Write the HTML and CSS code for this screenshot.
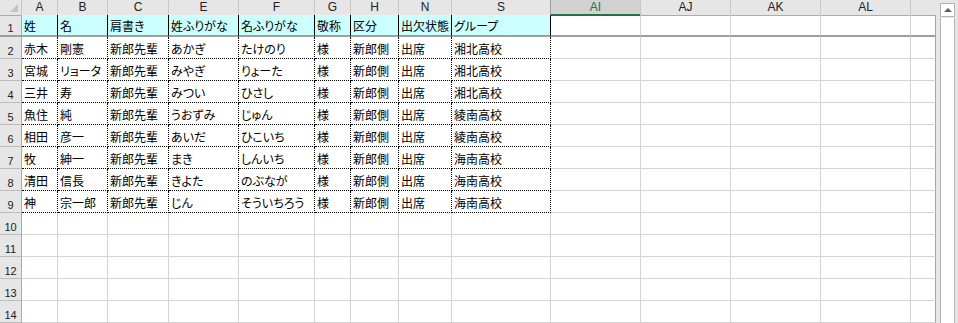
FILE: index.html
```html
<!DOCTYPE html>
<html lang="ja">
<head>
    <meta charset="UTF-8">
    <title>参加者リスト</title>
    <link rel="stylesheet" href="styles.css">
</head>
<body>
    <div class="window">
        <div class="sheet">
            <div class="row col-heads">
                <div class="corner"><span class="tri"></span></div>
                <div class="ch">A</div>
                <div class="ch">B</div>
                <div class="ch">C</div>
                <div class="ch">E</div>
                <div class="ch">F</div>
                <div class="ch">G</div>
                <div class="ch">H</div>
                <div class="ch">N</div>
                <div class="ch freeze">S</div>
                <div class="ch sel">AI</div>
                <div class="ch">AJ</div>
                <div class="ch">AK</div>
                <div class="ch">AL</div>
                <div class="ch last"></div>
            </div>

            <div class="row first">
                <div class="rh">1</div>
                <div class="c hd">姓</div>
                <div class="c hd">名</div>
                <div class="c hd">肩書き</div>
                <div class="c hd">姓ふりがな</div>
                <div class="c hd">名ふりがな</div>
                <div class="c hd">敬称</div>
                <div class="c hd">区分</div>
                <div class="c hd">出欠状態</div>
                <div class="c hd">グループ</div>
                <div class="c"></div><div class="c"></div><div class="c"></div><div class="c"></div><div class="c last"></div>
            </div>

            <div class="row">
                <div class="rh">2</div>
                <div class="c d">赤木</div><div class="c d">剛憲</div><div class="c d">新郎先輩</div><div class="c d">あかぎ</div><div class="c d">たけのり</div>
                <div class="c d">様</div><div class="c d">新郎側</div><div class="c d">出席</div><div class="c d">湘北高校</div>
                <div class="c"></div><div class="c"></div><div class="c"></div><div class="c"></div><div class="c last"></div>
            </div>
            <div class="row">
                <div class="rh">3</div>
                <div class="c d">宮城</div><div class="c d">リョータ</div><div class="c d">新郎先輩</div><div class="c d">みやぎ</div><div class="c d">りょーた</div>
                <div class="c d">様</div><div class="c d">新郎側</div><div class="c d">出席</div><div class="c d">湘北高校</div>
                <div class="c"></div><div class="c"></div><div class="c"></div><div class="c"></div><div class="c last"></div>
            </div>
            <div class="row">
                <div class="rh">4</div>
                <div class="c d">三井</div><div class="c d">寿</div><div class="c d">新郎先輩</div><div class="c d">みつい</div><div class="c d">ひさし</div>
                <div class="c d">様</div><div class="c d">新郎側</div><div class="c d">出席</div><div class="c d">湘北高校</div>
                <div class="c"></div><div class="c"></div><div class="c"></div><div class="c"></div><div class="c last"></div>
            </div>
            <div class="row">
                <div class="rh">5</div>
                <div class="c d">魚住</div><div class="c d">純</div><div class="c d">新郎先輩</div><div class="c d">うおずみ</div><div class="c d">じゅん</div>
                <div class="c d">様</div><div class="c d">新郎側</div><div class="c d">出席</div><div class="c d">綾南高校</div>
                <div class="c"></div><div class="c"></div><div class="c"></div><div class="c"></div><div class="c last"></div>
            </div>
            <div class="row">
                <div class="rh">6</div>
                <div class="c d">相田</div><div class="c d">彦一</div><div class="c d">新郎先輩</div><div class="c d">あいだ</div><div class="c d">ひこいち</div>
                <div class="c d">様</div><div class="c d">新郎側</div><div class="c d">出席</div><div class="c d">綾南高校</div>
                <div class="c"></div><div class="c"></div><div class="c"></div><div class="c"></div><div class="c last"></div>
            </div>
            <div class="row">
                <div class="rh">7</div>
                <div class="c d">牧</div><div class="c d">紳一</div><div class="c d">新郎先輩</div><div class="c d">まき</div><div class="c d">しんいち</div>
                <div class="c d">様</div><div class="c d">新郎側</div><div class="c d">出席</div><div class="c d">海南高校</div>
                <div class="c"></div><div class="c"></div><div class="c"></div><div class="c"></div><div class="c last"></div>
            </div>
            <div class="row">
                <div class="rh">8</div>
                <div class="c d">清田</div><div class="c d">信長</div><div class="c d">新郎先輩</div><div class="c d">きよた</div><div class="c d">のぶなが</div>
                <div class="c d">様</div><div class="c d">新郎側</div><div class="c d">出席</div><div class="c d">海南高校</div>
                <div class="c"></div><div class="c"></div><div class="c"></div><div class="c"></div><div class="c last"></div>
            </div>
            <div class="row">
                <div class="rh">9</div>
                <div class="c d">神</div><div class="c d">宗一郎</div><div class="c d">新郎先輩</div><div class="c d">じん</div><div class="c d">そういちろう</div>
                <div class="c d">様</div><div class="c d">新郎側</div><div class="c d">出席</div><div class="c d">海南高校</div>
                <div class="c"></div><div class="c"></div><div class="c"></div><div class="c"></div><div class="c last"></div>
            </div>

            <div class="row">
                <div class="rh">10</div>
                <div class="c"></div><div class="c"></div><div class="c"></div><div class="c"></div><div class="c"></div><div class="c"></div><div class="c"></div>
                <div class="c"></div><div class="c"></div><div class="c"></div><div class="c"></div><div class="c"></div><div class="c"></div><div class="c last"></div>
            </div>
            <div class="row">
                <div class="rh">11</div>
                <div class="c"></div><div class="c"></div><div class="c"></div><div class="c"></div><div class="c"></div><div class="c"></div><div class="c"></div>
                <div class="c"></div><div class="c"></div><div class="c"></div><div class="c"></div><div class="c"></div><div class="c"></div><div class="c last"></div>
            </div>
            <div class="row">
                <div class="rh">12</div>
                <div class="c"></div><div class="c"></div><div class="c"></div><div class="c"></div><div class="c"></div><div class="c"></div><div class="c"></div>
                <div class="c"></div><div class="c"></div><div class="c"></div><div class="c"></div><div class="c"></div><div class="c"></div><div class="c last"></div>
            </div>
            <div class="row">
                <div class="rh">13</div>
                <div class="c"></div><div class="c"></div><div class="c"></div><div class="c"></div><div class="c"></div><div class="c"></div><div class="c"></div>
                <div class="c"></div><div class="c"></div><div class="c"></div><div class="c"></div><div class="c"></div><div class="c"></div><div class="c last"></div>
            </div>
            <div class="row">
                <div class="rh">14</div>
                <div class="c"></div><div class="c"></div><div class="c"></div><div class="c"></div><div class="c"></div><div class="c"></div><div class="c"></div>
                <div class="c"></div><div class="c"></div><div class="c"></div><div class="c"></div><div class="c"></div><div class="c"></div><div class="c last"></div>
            </div>
        </div>

        <div class="vscroll">
            <div class="sb-btn"><span class="sb-arrow"></span></div>
            <div class="sb-track"></div>
        </div>
    </div>
</body>
</html>
```

FILE: styles.css
```css
body {
    margin: 0;
    background: #e6e6e6;
    font-family: "Noto Sans CJK JP", sans-serif;
    color: #000;
    overflow: hidden;
}

.window {
    display: flex;
    width: 958px;
    height: 323px;
}

.sheet {
    width: 936px;
    background: #fff;
}

/* columns: rowhead A B C E F G H N S AI AJ AK AL (partial) */
.row {
    display: grid;
    grid-template-columns: 22px 36px 50px 61px 70px 76px 36px 48px 53px 99px 90px 90px 90px 90px 25px;
    height: 22px;
}

.row > div {
    box-sizing: border-box;
}

/* column header bar */
.col-heads {
    height: 15px;
    background: #e6e6e6;
}

.corner {
    position: relative;
    border-right: 1px solid #c8c8c8;
    border-bottom: 1px solid #ababab;
}

.tri {
    position: absolute;
    right: 3px;
    bottom: 3px;
    width: 0;
    height: 0;
    border-left: 8px solid transparent;
    border-bottom: 8px solid #c4c4c4;
}

.ch {
    border-right: 1px solid #c8c8c8;
    border-bottom: 1px solid #ababab;
    font-family: "Liberation Sans", sans-serif;
    font-size: 12px;
    line-height: 14px;
    text-align: center;
    color: #222;
}

.ch.freeze {
    border-right: 1px solid #9c9c9c;
}

.ch.sel {
    background: #d2d2d2;
    color: #217346;
    border-bottom: 2px solid #217346;
}

.ch.last {
    border-right: none;
}

/* row header */
.rh {
    background: #e6e6e6;
    border-right: 1px solid #ababab;
    border-bottom: 1px solid #bcbcbc;
    font-family: "Liberation Sans", sans-serif;
    font-size: 11px;
    line-height: 12px;
    color: #222;
    display: flex;
    align-items: flex-end;
    justify-content: center;
    padding-bottom: 1px;
}

/* cells */
.c {
    border-right: 1px solid #d4d4d4;
    border-bottom: 1px solid #d4d4d4;
    font-size: 12px;
    line-height: 12px;
    font-feature-settings: "palt";
    padding: 0 0 3px 2px;
    display: flex;
    align-items: flex-end;
    white-space: nowrap;
    overflow: hidden;
}

.c.last {
    border-right: 1px solid #a6a6a6;
}

.first > div {
    border-bottom: 2px solid #9e9e9e;
}

.c.hd {
    background: #ccffff;
    border-right: 1px solid #000;
}

.c.d {
    border-right: 1px dotted #000;
    border-bottom: 1px dotted #000;
}

/* vertical scroll bar */
.vscroll {
    width: 22px;
    box-sizing: border-box;
    padding: 3px 3px 0 4px;
    display: flex;
    flex-direction: column;
}

.sb-btn {
    height: 14px;
    border: 1px solid #b4b4b4;
    background: #fff;
    box-sizing: border-box;
    display: flex;
    align-items: center;
    justify-content: center;
}

.sb-arrow {
    width: 0;
    height: 0;
    border-left: 4px solid transparent;
    border-right: 4px solid transparent;
    border-bottom: 4px solid #606060;
}

.sb-track {
    flex: 1;
    margin-top: 1px;
    background: #fff;
    border-left: 1px solid #b4b4b4;
    border-right: 1px solid #b4b4b4;
}
```
